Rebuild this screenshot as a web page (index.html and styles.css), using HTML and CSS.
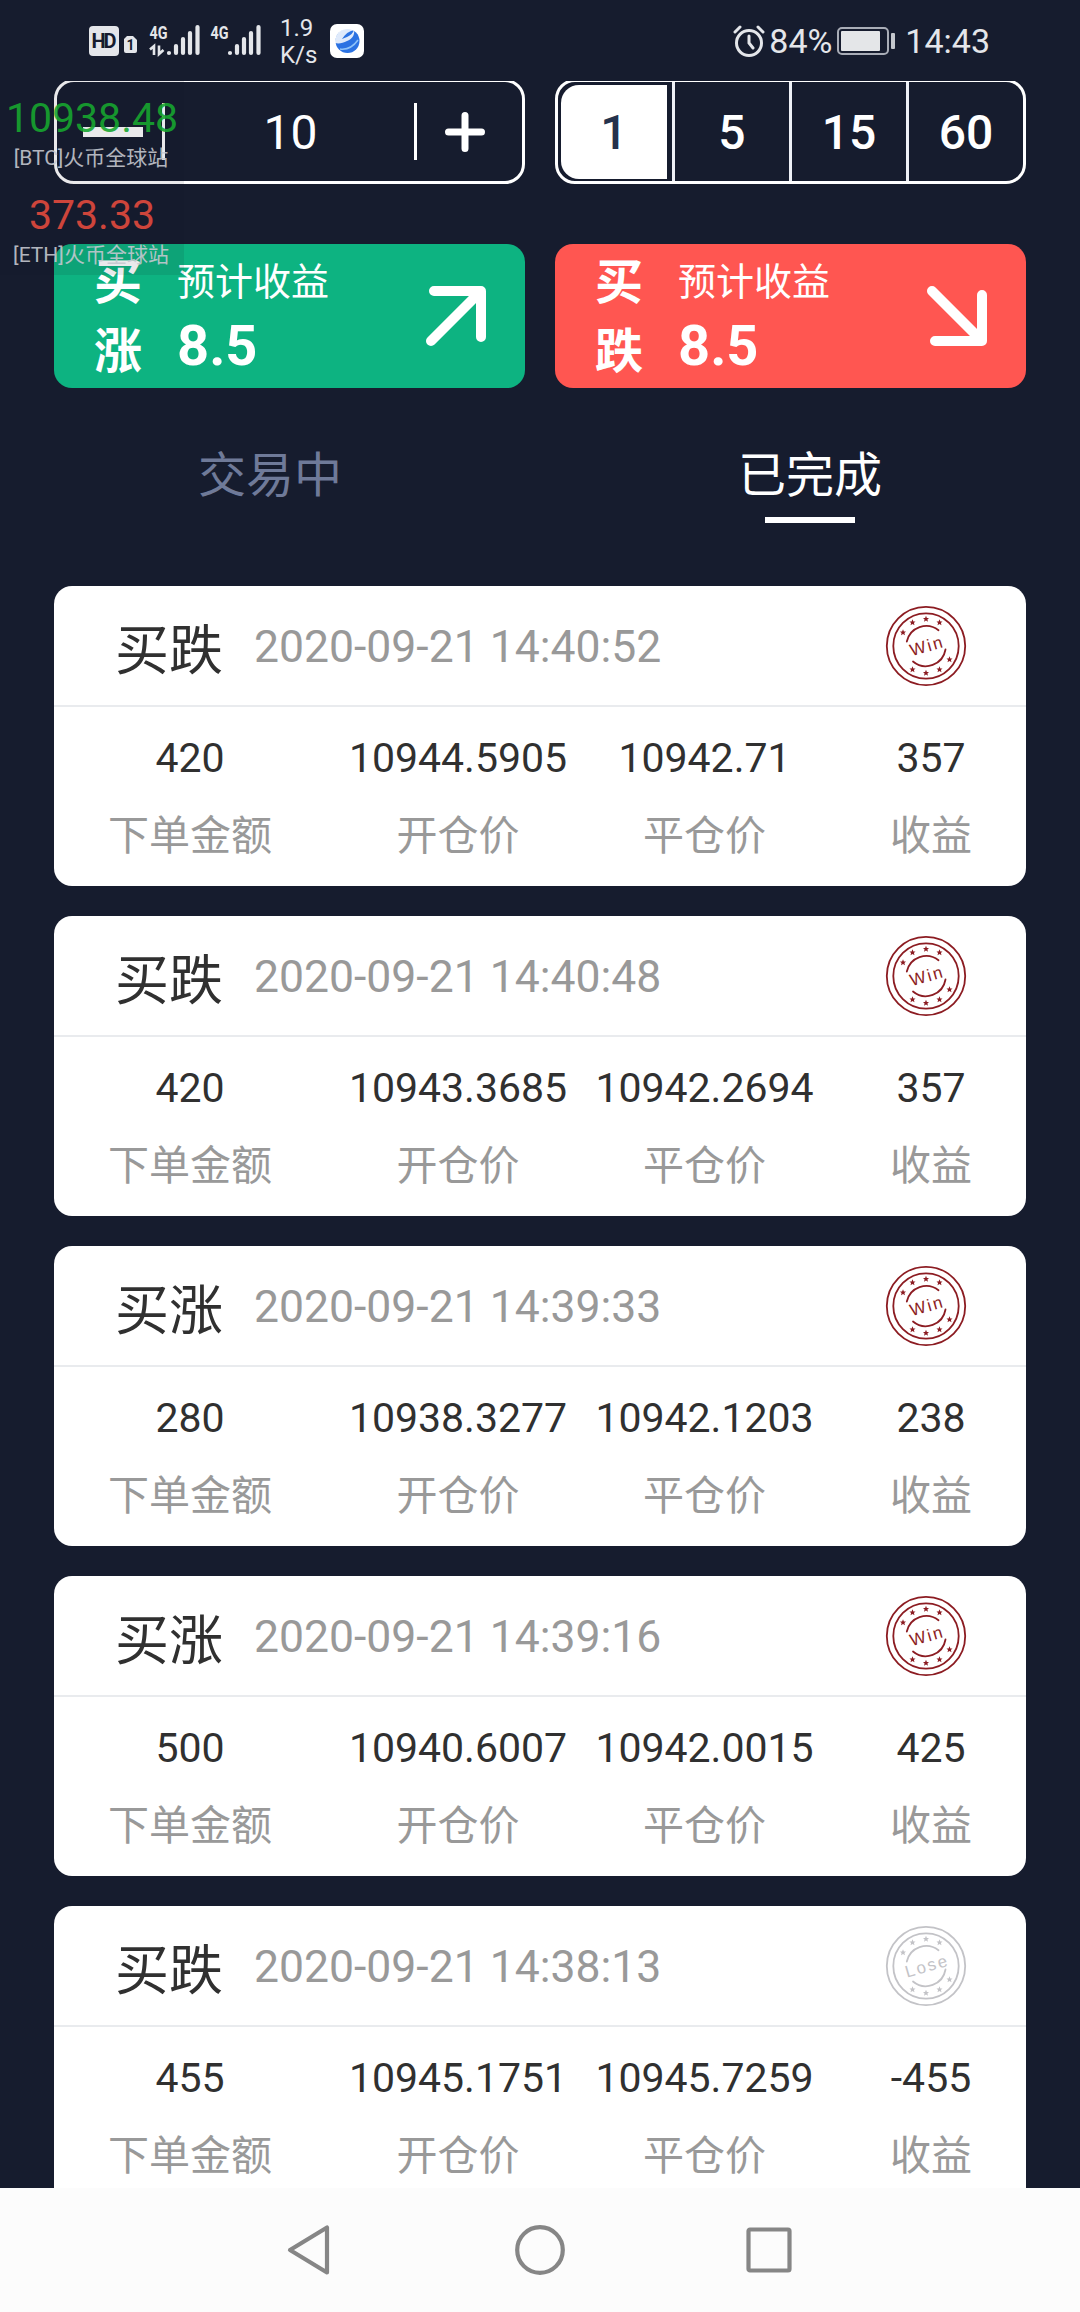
FILE: index.html
```html
<!DOCTYPE html>
<html lang="zh-CN">
    <head>
        <meta charset="utf-8">
        <link rel="stylesheet" href="styles.css">
        <title>交易</title>
    </head>
    <body>

        <!-- shared shapes for the result stamps -->
        <svg class="shapes" width="0" height="0">
            <symbol id="star" viewBox="-5 -5 10 10">
                <path d="M0-3.2L.9-1.1 3-1 1.4.5 2 2.7 0 1.5-2 2.7-1.4.5-3-1-.9-1.1Z" fill="currentColor"/>
            </symbol>
            <symbol id="stamp" viewBox="0 0 82 82">
                <g fill="none" stroke="currentColor" stroke-width="1.8">
                    <circle cx="41" cy="41" r="39.2"/>
                    <circle cx="41" cy="41" r="32.7"/>
                    <path d="M21.8 36.5A20 20 0 0 1 53.5 25.2M60.500 44.500A20 20 0 0 1 28 56.500" stroke-linecap="round"/>
                </g>
                <use href="#star" x="13" y="22.500" width="10" height="10"/>
                <use href="#star" x="22.500" y="12.500" width="10" height="10"/>
                <use href="#star" x="36" y="9" width="10" height="10"/>
                <use href="#star" x="49.500" y="12.500" width="10" height="10"/>
                <use href="#star" x="59.500" y="49.500" width="10" height="10"/>
                <use href="#star" x="49.500" y="59.500" width="10" height="10"/>
                <use href="#star" x="36" y="63" width="10" height="10"/>
                <use href="#star" x="22.500" y="59.500" width="10" height="10"/>
            </symbol>
        </svg>

        <header class="status-bar">
            <div class="status-left">
                <svg class="signal-icons" width="173" height="38" viewBox="88 20 173 38">
                    <rect x="89" y="26" width="30" height="30" rx="4" fill="#e4e6ea"/>
                    <text x="91.5" y="48" class="hd-text" textLength="25">HD</text>
                    <path d="M127 36h6l4 4v11a2 2 0 0 1-2 2h-9a2 2 0 0 1-2-2V39z" fill="#e4e6ea"/>
                    <text x="126.5" y="50" class="sim-text">1</text>
                    <text x="149.5" y="38.5" class="net-text" textLength="18" lengthAdjust="spacingAndGlyphs">4G</text>
                    <text x="210.5" y="38.5" class="net-text" textLength="18" lengthAdjust="spacingAndGlyphs">4G</text>
                    <path d="M150 49.500l4-3.500V55M159 45.500V54l4.500-4" stroke="#e4e6ea" stroke-width="2.600" fill="none"/>
                    <g stroke="#e4e6ea" stroke-width="4.200" stroke-linecap="round">
                        <path d="M169 53v0M176 46v7M183 39v14M190 33v20M197.500 27v26"/>
                        <path d="M230 53v0M237 46v7M244 39v14M251 33v20M258.500 27v26"/>
                    </g>
                </svg>
                <div class="net-speed">1.9<br>K/s</div>
                <svg class="app-icon" width="34" height="34" viewBox="0 0 34 34">
                    <rect width="34" height="34" rx="7" fill="#fff"/>
                    <circle cx="17.500" cy="17" r="12" fill="#2b72e2"/>
                    <path d="M9 8c4-4 10-5 15-2-5 1-9 4-12 9l5-2c4-2 6-4 7-7 1 5-2 9-7 11-4 2-8 3-12 2 0-4 1-8 4-11z" fill="#fff" opacity=".85"/>
                    <path d="M10 25c7 1 13-2 18-9" stroke="#8fc3f8" stroke-width="1.500" fill="none"/>
                </svg>
            </div>
            <div class="status-right">
                <svg width="32" height="32" viewBox="0 0 32 32" fill="none" stroke="#e4e6ea" stroke-width="3">
                    <circle cx="16" cy="18" r="12.500"/>
                    <path d="M16 11v7l4 5M2 7l5-5M25 2l5 5" stroke-linecap="round"/>
                </svg>
                <span class="battery-text">84%</span>
                <svg class="battery" width="59" height="28" viewBox="0 0 59 28">
                    <rect x="1" y="1" width="50" height="26" rx="4" fill="none" stroke="#a9adb7" stroke-width="2"/>
                    <rect x="4" y="4" width="39" height="20" rx="1" fill="#e4e6e8"/>
                    <rect x="54" y="6" width="4" height="16" rx="1" fill="#c4c7cd"/>
                </svg>
                <span class="clock">14:43</span>
            </div>
        </header>

        <main class="page">
            <div class="controls">
                <div class="stepper">
                    <div class="step-button step-minus"><span class="minus"></span></div>
                    <div class="step-value">10</div>
                    <div class="step-button step-plus">
                        <svg width="42" height="42" viewBox="0 0 42 42">
                            <path d="M21 4.500v33M4.500 21h33" stroke="#fff" stroke-width="7" stroke-linecap="round"/>
                        </svg>
                    </div>
                </div>
                <div class="periods">
                    <div class="period"><span class="period-selected">1</span></div>
                    <div class="period">5</div>
                    <div class="period">15</div>
                    <div class="period">60</div>
                </div>
            </div>

            <div class="trade-buttons">
                <div class="trade-button buy-up">
                    <div class="trade-name">买<br>涨</div>
                    <div class="trade-profit">
                        <p class="profit-label">预计收益</p>
                        <p class="profit-value">8.5</p>
                    </div>
                    <svg class="arrow" width="62" height="62" viewBox="0 0 62 62">
                        <path d="M6 56L56 6M9 6H56V52" />
                    </svg>
                </div>
                <div class="trade-button buy-down">
                    <div class="trade-name">买<br>跌</div>
                    <div class="trade-profit">
                        <p class="profit-label">预计收益</p>
                        <p class="profit-value">8.5</p>
                    </div>
                    <svg class="arrow" width="62" height="62" viewBox="0 0 62 62">
                        <path d="M6 6L56 56M9 56H56V10" />
                    </svg>
                </div>
            </div>

            <div class="tabs">
                <div class="tab">交易中</div>
                <div class="tab tab-active">已完成</div>
            </div>

            <div class="orders">
                <div class="order">
                    <div class="order-header">
                        <span class="order-type">买跌</span>
                        <span class="order-time">2020-09-21 14:40:52</span>
                        <svg class="stamp win" viewBox="0 0 82 82"><use href="#stamp"/><text x="42" y="47" transform="rotate(-16 41 41)">Win</text></svg>
                    </div>
                    <div class="order-body">
                        <div class="cell"><p class="value">420</p><p class="label">下单金额</p></div>
                        <div class="cell"><p class="value">10944.5905</p><p class="label">开仓价</p></div>
                        <div class="cell"><p class="value">10942.71</p><p class="label">平仓价</p></div>
                        <div class="cell cell-profit"><p class="value">357</p><p class="label">收益</p></div>
                    </div>
                </div>

                <div class="order">
                    <div class="order-header">
                        <span class="order-type">买跌</span>
                        <span class="order-time">2020-09-21 14:40:48</span>
                        <svg class="stamp win" viewBox="0 0 82 82"><use href="#stamp"/><text x="42" y="47" transform="rotate(-16 41 41)">Win</text></svg>
                    </div>
                    <div class="order-body">
                        <div class="cell"><p class="value">420</p><p class="label">下单金额</p></div>
                        <div class="cell"><p class="value">10943.3685</p><p class="label">开仓价</p></div>
                        <div class="cell"><p class="value">10942.2694</p><p class="label">平仓价</p></div>
                        <div class="cell cell-profit"><p class="value">357</p><p class="label">收益</p></div>
                    </div>
                </div>

                <div class="order">
                    <div class="order-header">
                        <span class="order-type">买涨</span>
                        <span class="order-time">2020-09-21 14:39:33</span>
                        <svg class="stamp win" viewBox="0 0 82 82"><use href="#stamp"/><text x="42" y="47" transform="rotate(-16 41 41)">Win</text></svg>
                    </div>
                    <div class="order-body">
                        <div class="cell"><p class="value">280</p><p class="label">下单金额</p></div>
                        <div class="cell"><p class="value">10938.3277</p><p class="label">开仓价</p></div>
                        <div class="cell"><p class="value">10942.1203</p><p class="label">平仓价</p></div>
                        <div class="cell cell-profit"><p class="value">238</p><p class="label">收益</p></div>
                    </div>
                </div>

                <div class="order">
                    <div class="order-header">
                        <span class="order-type">买涨</span>
                        <span class="order-time">2020-09-21 14:39:16</span>
                        <svg class="stamp win" viewBox="0 0 82 82"><use href="#stamp"/><text x="42" y="47" transform="rotate(-16 41 41)">Win</text></svg>
                    </div>
                    <div class="order-body">
                        <div class="cell"><p class="value">500</p><p class="label">下单金额</p></div>
                        <div class="cell"><p class="value">10940.6007</p><p class="label">开仓价</p></div>
                        <div class="cell"><p class="value">10942.0015</p><p class="label">平仓价</p></div>
                        <div class="cell cell-profit"><p class="value">425</p><p class="label">收益</p></div>
                    </div>
                </div>

                <div class="order">
                    <div class="order-header">
                        <span class="order-type">买跌</span>
                        <span class="order-time">2020-09-21 14:38:13</span>
                        <svg class="stamp lose" viewBox="0 0 82 82"><use href="#stamp"/><text x="42" y="47" transform="rotate(-16 41 41)">Lose</text></svg>
                    </div>
                    <div class="order-body">
                        <div class="cell"><p class="value">455</p><p class="label">下单金额</p></div>
                        <div class="cell"><p class="value">10945.1751</p><p class="label">开仓价</p></div>
                        <div class="cell"><p class="value">10945.7259</p><p class="label">平仓价</p></div>
                        <div class="cell cell-profit"><p class="value">-455</p><p class="label">收益</p></div>
                    </div>
                </div>
            </div>
        </main>

        <nav class="nav-bar">
            <svg width="50" height="54" viewBox="0 0 50 54"><path d="M43 4.500V49.500L6 27z"/></svg>
            <svg width="54" height="54" viewBox="0 0 54 54"><circle cx="28" cy="27" r="22.800"/></svg>
            <svg width="50" height="54" viewBox="0 0 50 54"><rect x="4.500" y="6.500" width="41" height="41" rx="1.500"/></svg>
        </nav>

        <!-- floating price ticker -->
        <div class="ticker">
            <p class="ticker-price price-up">10938.48</p>
            <p class="ticker-name">[BTC]火币全球站</p>
            <p class="ticker-price price-down">373.33</p>
            <p class="ticker-name">[ETH]火币全球站</p>
        </div>

    </body>
</html>
```
FILE: styles.css
```css
* {
    box-sizing: border-box;
}

body {
    margin: 0;
    width: 1080px;
    height: 2312px;
    overflow: hidden;
    display: flex;
    flex-direction: column;
    background-color: #161c2e;
    color: white;
    font-family: Roboto, "Noto Sans CJK SC", sans-serif;
}

p {
    margin: 0;
}

.shapes {
    position: absolute;
}

/* status bar */

.status-bar {
    flex: none;
    height: 81px;
    display: flex;
    justify-content: space-between;
    padding-left: 88px;
    padding-right: 90px;
    color: #e4e6ea;
}

.status-left {
    display: flex;
    align-items: flex-start;
    padding-top: 20px;
}

.signal-icons {
    overflow: visible;
}

.hd-text {
    font-size: 20px;
    font-weight: bold;
    fill: #161c2e;
}

.sim-text {
    font-size: 14px;
    font-weight: bold;
    fill: #161c2e;
}

.net-text {
    font-size: 19px;
    font-weight: bold;
    fill: #e4e6ea;
}

.net-speed {
    width: 69px;
    margin-top: -5px;
    padding-left: 19px;
    font-size: 24px;
    line-height: 27px;
}

.app-icon {
    margin-top: 4px;
}

.status-right {
    display: flex;
    align-items: center;
    height: 81px;
}

.battery-text {
    width: 72px;
    padding-left: 4px;
    font-size: 34px;
}

.clock {
    padding-left: 9px;
    font-size: 34px;
}

/* amount and period */

.page {
    flex: 1;
    min-height: 0;
    overflow: hidden;
}

.controls {
    display: flex;
    gap: 30px;
    margin-top: -2px;
    padding: 0 54px;
}

.stepper, .periods {
    width: 471px;
    height: 105px;
    display: flex;
    align-items: center;
    border: 3px solid white;
    border-radius: 20px;
    overflow: hidden;
}

.step-button {
    height: 57px;
    display: flex;
    align-items: center;
    justify-content: center;
}

.step-minus {
    width: 108px;
    padding-left: 6px;
    border-right: 3px solid white;
}

.minus {
    width: 60px;
    height: 10px;
    background-color: white;
}

.step-value {
    flex: 1;
    padding-top: 2px;
    padding-left: 2px;
    text-align: center;
    font-size: 48px;
}

.step-plus {
    width: 108px;
    border-left: 3px solid white;
    padding-right: 9px;
}

.period {
    flex: 1;
    height: 99px;
    display: flex;
    align-items: center;
    justify-content: center;
    padding-top: 2px;
    border-right: 3px solid #eef0f6;
    font-size: 48px;
    font-weight: 500;
}

.period:first-child {
    padding-top: 0;
}

.period:last-child {
    border-right: none;
}

.period-selected {
    flex: 1;
    height: 94px;
    display: flex;
    align-items: center;
    justify-content: center;
    padding-top: 2px;
    margin-left: 3px;
    margin-right: 5px;
    border-radius: 18px 0 0 18px;
    background-color: white;
    color: #25324c;
}

/* buy buttons */

.trade-buttons {
    display: flex;
    gap: 30px;
    padding: 60px 54px 0;
}

.trade-button {
    width: 471px;
    height: 144px;
    display: flex;
    align-items: center;
    padding-left: 40px;
    padding-right: 38px;
    border-radius: 18px;
}

.buy-up {
    background-color: #0db381;
}

.buy-down {
    background-color: #ff5651;
}

.trade-name {
    width: 83px;
    padding-top: 1px;
    font-size: 48px;
    font-weight: bold;
    line-height: 69px;
}

.profit-label {
    font-size: 38px;
    line-height: 60px;
}

.profit-value {
    font-size: 56px;
    font-weight: bold;
    line-height: 68px;
}

.arrow {
    margin-left: auto;
    fill: none;
    stroke: white;
    stroke-width: 10;
    stroke-linecap: round;
    stroke-linejoin: round;
}

/* tabs */

.tabs {
    display: flex;
    height: 198px;
    padding-top: 52px;
}

.tab {
    width: 540px;
    text-align: center;
    color: #6f7a99;
    font-size: 48px;
    line-height: 72px;
}

.tab-active {
    color: white;
}

.tab-active::after {
    content: "";
    display: block;
    width: 90px;
    height: 6px;
    margin: 5px auto 0;
    background-color: white;
}

/* order list */

.orders {
    display: flex;
    flex-direction: column;
    gap: 30px;
    padding: 0 54px;
}

.order {
    flex: none;
    height: 300px;
    border-radius: 18px;
    background-color: white;
}

.order-header {
    height: 121px;
    display: flex;
    align-items: center;
    padding-left: 61px;
    padding-right: 59px;
    border-bottom: 2px solid #e9ebee;
}

.order-type {
    width: 139px;
    padding-top: 1px;
    color: #303030;
    font-size: 54px;
}

.order-time {
    padding-top: 3px;
    color: #999;
    font-size: 44.5px;
}

.stamp {
    width: 82px;
    height: 82px;
    margin-left: auto;
}

.stamp text {
    font-family: "Liberation Sans", sans-serif;
    font-size: 17px;
    letter-spacing: 2px;
    text-anchor: middle;
    fill: currentColor;
}

.win {
    color: #8c1c22;
}

.lose {
    color: #c3c3c7;
}

.order-body {
    display: grid;
    grid-template-columns: 272px 264px 229px 207px;
    padding-top: 12px;
    text-align: center;
    line-height: 78px;
}

.cell-profit {
    padding-left: 17px;
}

.value {
    color: #303030;
    font-size: 41px;
}

.label {
    color: #999;
    font-size: 41px;
}

/* system navigation */

.nav-bar {
    flex: none;
    height: 124px;
    display: flex;
    align-items: center;
    justify-content: space-between;
    padding-left: 284px;
    padding-right: 286px;
    background-color: #fcfcfc;
}

.nav-bar svg {
    fill: none;
    stroke: #868686;
    stroke-width: 4.2;
    stroke-linejoin: round;
}

/* ticker window over the page */

.ticker {
    position: absolute;
    left: 0;
    top: 80px;
    width: 184px;
    height: 195px;
    background-color: rgba(20, 24, 36, 0.1);
    text-align: center;
    opacity: 0.9;
}

.ticker-price {
    height: 63px;
    font-size: 41px;
    line-height: 76px;
}

.price-up {
    color: #17a52f;
}

.price-down {
    color: #e34a3d;
}

.ticker-name {
    height: 34px;
    padding-right: 2px;
    color: #c3c6ce;
    font-size: 21px;
    line-height: 31px;
}
```
